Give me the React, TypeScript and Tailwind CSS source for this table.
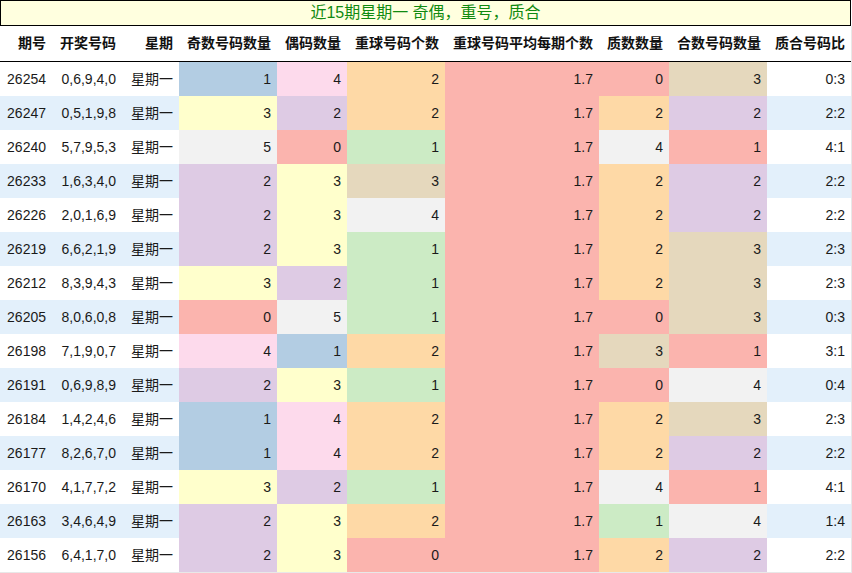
import React from "react";

const C: Record<string, string> = {
  r: "bg-[#fbb4ae]",
  b: "bg-[#b3cde3]",
  g: "bg-[#ccebc5]",
  p: "bg-[#decbe4]",
  o: "bg-[#fed9a6]",
  y: "bg-[#ffffcc]",
  t: "bg-[#e5d8bd]",
  k: "bg-[#fddaec]",
  s: "bg-[#f2f2f2]",
};

type Row = [string, string, [string, string], [string, string], [string, string], [string, string], [string, string], string];

const rows: Row[] = [
  ["26254", "0,6,9,4,0", ["1", "b"], ["4", "k"], ["2", "o"], ["0", "r"], ["3", "t"], "0:3"],
  ["26247", "0,5,1,9,8", ["3", "y"], ["2", "p"], ["2", "o"], ["2", "o"], ["2", "p"], "2:2"],
  ["26240", "5,7,9,5,3", ["5", "s"], ["0", "r"], ["1", "g"], ["4", "s"], ["1", "r"], "4:1"],
  ["26233", "1,6,3,4,0", ["2", "p"], ["3", "y"], ["3", "t"], ["2", "o"], ["2", "p"], "2:2"],
  ["26226", "2,0,1,6,9", ["2", "p"], ["3", "y"], ["4", "s"], ["2", "o"], ["2", "p"], "2:2"],
  ["26219", "6,6,2,1,9", ["2", "p"], ["3", "y"], ["1", "g"], ["2", "o"], ["3", "t"], "2:3"],
  ["26212", "8,3,9,4,3", ["3", "y"], ["2", "p"], ["1", "g"], ["2", "o"], ["3", "t"], "2:3"],
  ["26205", "8,0,6,0,8", ["0", "r"], ["5", "s"], ["1", "g"], ["0", "r"], ["3", "t"], "0:3"],
  ["26198", "7,1,9,0,7", ["4", "k"], ["1", "b"], ["2", "o"], ["3", "t"], ["1", "r"], "3:1"],
  ["26191", "0,6,9,8,9", ["2", "p"], ["3", "y"], ["1", "g"], ["0", "r"], ["4", "s"], "0:4"],
  ["26184", "1,4,2,4,6", ["1", "b"], ["4", "k"], ["2", "o"], ["2", "o"], ["3", "t"], "2:3"],
  ["26177", "8,2,6,7,0", ["1", "b"], ["4", "k"], ["2", "o"], ["2", "o"], ["2", "p"], "2:2"],
  ["26170", "4,1,7,7,2", ["3", "y"], ["2", "p"], ["1", "g"], ["4", "s"], ["1", "r"], "4:1"],
  ["26163", "3,4,6,4,9", ["2", "p"], ["3", "y"], ["2", "o"], ["1", "g"], ["4", "s"], "1:4"],
  ["26156", "6,4,1,7,0", ["2", "p"], ["3", "y"], ["0", "r"], ["2", "o"], ["2", "p"], "2:2"],
];

const headers = ["期号", "开奖号码", "星期", "奇数号码数量", "偶码数量", "重球号码个数", "重球号码平均每期个数", "质数数量", "合数号码数量", "质合号码比"];

const grid = "grid grid-cols-[52px_70px_57px_98px_70px_98px_154px_70px_98px_84px]";

export default function App() {
  return (
    <div
      className="w-[852px] h-[573px] bg-white text-[14px] text-[#1a1a1a]"
      style={{ fontFamily: '"Liberation Sans", "Noto Sans CJK SC", sans-serif' }}
    >
      <div className="w-[851px] h-[26px] border border-black bg-[#ffffdf] flex items-center justify-center text-[16px] text-[#108a10] leading-none">
        近15期星期一 奇偶，重号，质合
      </div>
      <div className="w-[852px] border-r border-b border-[#e8e8e8]">
        <div className={`${grid} h-[36px] border-b border-black font-bold text-[#111]`}>
          {headers.map((h) => (
            <div key={h} className="flex items-center justify-end pr-[6px] whitespace-nowrap">
              {h}
            </div>
          ))}
        </div>
        {rows.map((r, i) => {
          const band = i % 2 === 1 ? "bg-[#e3f0fb]" : "bg-white";
          return (
            <div key={r[0]} className={`${grid} h-[34px]`}>
              <div className={`${band} flex items-center justify-end pr-[6px]`}>{r[0]}</div>
              <div className={`${band} flex items-center justify-end pr-[6px]`}>{r[1]}</div>
              <div className={`${band} flex items-center justify-end pr-[6px]`}>星期一</div>
              <div className={`${C[r[2][1]]} flex items-center justify-end pr-[6px]`}>{r[2][0]}</div>
              <div className={`${C[r[3][1]]} flex items-center justify-end pr-[6px]`}>{r[3][0]}</div>
              <div className={`${C[r[4][1]]} flex items-center justify-end pr-[6px]`}>{r[4][0]}</div>
              <div className={`${C.r} flex items-center justify-end pr-[6px]`}>1.7</div>
              <div className={`${C[r[5][1]]} flex items-center justify-end pr-[6px]`}>{r[5][0]}</div>
              <div className={`${C[r[6][1]]} flex items-center justify-end pr-[6px]`}>{r[6][0]}</div>
              <div className={`${band} flex items-center justify-end pr-[6px]`}>{r[7]}</div>
            </div>
          );
        })}
      </div>
    </div>
  );
}
